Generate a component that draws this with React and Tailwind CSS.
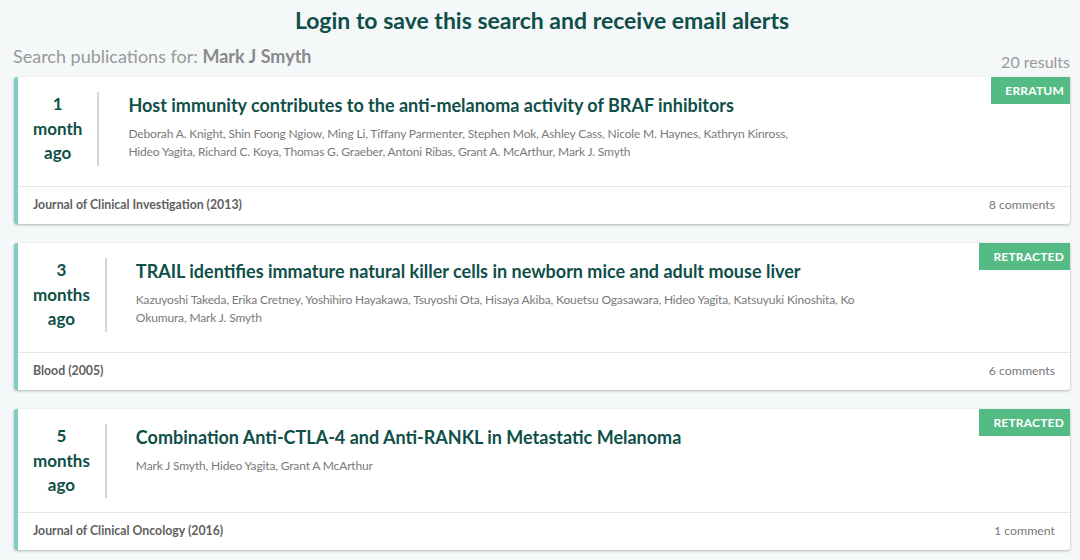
import React from "react";

const publications = [
  {
    ago: ["1", "month", "ago"],
    title: "Host immunity contributes to the anti-melanoma activity of BRAF inhibitors",
    authors: [
      "Deborah A. Knight, Shin Foong Ngiow, Ming Li, Tiffany Parmenter, Stephen Mok, Ashley Cass, Nicole M. Haynes, Kathryn Kinross,",
      "Hideo Yagita, Richard C. Koya, Thomas G. Graeber, Antoni Ribas, Grant A. McArthur, Mark J. Smyth",
    ],
    journal: "Journal of Clinical Investigation (2013)",
    comments: "8 comments",
    badge: "Erratum",
  },
  {
    ago: ["3", "months", "ago"],
    title: "TRAIL identifies immature natural killer cells in newborn mice and adult mouse liver",
    authors: [
      "Kazuyoshi Takeda, Erika Cretney, Yoshihiro Hayakawa, Tsuyoshi Ota, Hisaya Akiba, Kouetsu Ogasawara, Hideo Yagita, Katsuyuki Kinoshita, Ko",
      "Okumura, Mark J. Smyth",
    ],
    journal: "Blood (2005)",
    comments: "6 comments",
    badge: "Retracted",
  },
  {
    ago: ["5", "months", "ago"],
    title: "Combination Anti-CTLA-4 and Anti-RANKL in Metastatic Melanoma",
    authors: ["Mark J Smyth, Hideo Yagita, Grant A McArthur"],
    journal: "Journal of Clinical Oncology (2016)",
    comments: "1 comment",
    badge: "Retracted",
  },
];

const PublicationCard = ({ pub }) => {
  return (
    <div className="relative bg-white rounded-[3px] border-l-4 border-[#7fcdc4] shadow-[0_1px_3px_rgba(0,0,0,0.28)]">
      <span className="absolute top-0 right-0 h-[27px] flex items-center pl-[14px] pr-[6px] bg-[#55bb85] text-white text-[12px] font-bold uppercase tracking-[0.2px]">
        {pub.badge}
      </span>

      <div className="flex items-start pt-[15px] pb-[14px]">
        <div className="px-[15px] border-r-2 border-[#d6d6d6] text-center text-[17px] leading-[24.5px] font-bold text-[#0f4f49]">
          {pub.ago.map((word) => (
            <div key={word}>{word}</div>
          ))}
        </div>
        <div className="pl-[29px] pb-[11px]">
          <h2 className="text-[18px] leading-[26px] font-bold text-[#0f4f49]">{pub.title}</h2>
          <div className="mt-[7px] text-[12px] leading-[18px] tracking-[-0.15px] text-[#7a7a7a]">
            {pub.authors.map((line) => (
              <div key={line}>{line}</div>
            ))}
          </div>
        </div>
      </div>

      <div className="h-[38px] flex items-center justify-between px-[15px] border-t border-[#e6e6e6] text-[12.3px]">
        <span className="font-bold text-[#5f5f5f]">{pub.journal}</span>
        <span className="text-[#777]">{pub.comments}</span>
      </div>
    </div>
  );
};

export default function App() {
  return (
    <div className="min-h-screen bg-[#f4f8f9] pl-[14px] pr-[10px] pb-6 font-['Lato','Noto_Sans',sans-serif]">
      <h1 className="pt-[5px] text-center text-[23px] leading-[30px] font-bold text-[#0f4f49]">
        Login to save this search and receive email alerts
      </h1>

      <div className="flex justify-between items-end mt-[9px] mb-[9px]">
        <p className="-ml-px text-[18px] leading-[24px] text-[#999]">
          Search publications for: <span className="font-bold text-[#8a8a8a]">Mark J Smyth</span>
        </p>
        <span className="text-[16px] leading-[20px] text-[#9a9a9a] -mb-[4px]">20 results</span>
      </div>

      <div className="flex flex-col gap-[19px]">
        {publications.map((pub) => (
          <PublicationCard key={pub.title} pub={pub} />
        ))}
      </div>
    </div>
  );
}
